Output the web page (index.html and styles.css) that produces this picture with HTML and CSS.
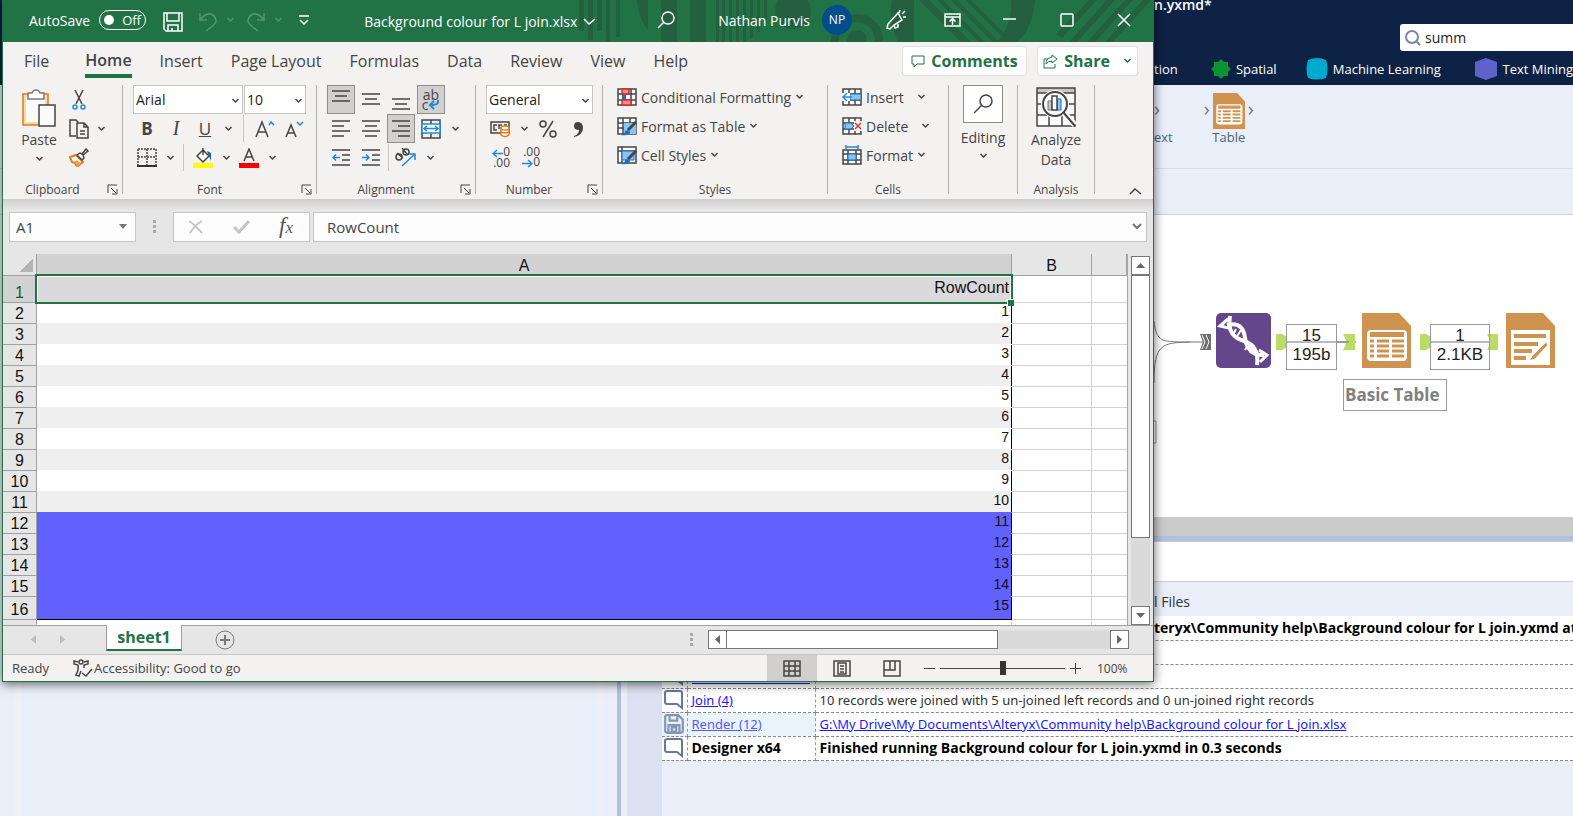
FILE: index.html
```html
<!DOCTYPE html>
<html lang="en">
<head>
    <meta charset="UTF-8">
    <meta name="viewport" content="width=device-width, initial-scale=1.0">
    <link rel="stylesheet" href="styles.css">
    <title>Background colour for L join.xlsx</title>
</head>
<body>

<!-- shared icons -->
<svg class="defs" aria-hidden="true">
    <symbol id="chev" viewBox="0 0 8 6"><path d="M1 1l3 3 3-3" fill="none" stroke="currentColor" stroke-width="1.5"/></symbol>
    <symbol id="launch" viewBox="0 0 11 11"><path d="M1 9V1h9M4 4l5 5M10 5v5H5" fill="none" stroke="currentColor"/></symbol>
    <symbol id="bubble" viewBox="0 0 20 22"><path d="M3 2h13q2 0 2 2v15l-5-4H3q-2 0-2-2V4q0-2 2-2z" fill="#fff" stroke="#66799c" stroke-width="2"/></symbol>
    <symbol id="tool-table" viewBox="0 0 49 55">
        <path d="M0 0h37l12 13v42H0z" fill="#d0924f"/>
        <rect x="6" y="18" width="38" height="29" rx="3" fill="#d0924f" stroke="#fff" stroke-width="2"/>
        <path d="M7 20h36v26H7z" fill="#fff"/>
        <path d="M8 20h34v4H8z" fill="#d0924f"/>
        <path d="M8 28h4m3 0h12m3 0h12M8 33h4m3 0h12m3 0h12M8 38h4m3 0h12m3 0h12M8 43h4m3 0h12m3 0h12" stroke="#d0924f" stroke-width="3"/>
    </symbol>
</svg>

<!-- Alteryx Designer -->
<main class="designer">
    <header class="designer-header">
        <div class="docked">
            <div class="project">n.yxmd*</div>
            <label class="finder">
                <svg width="18" height="18" viewBox="0 0 18 18"><circle cx="8" cy="8" r="6" fill="none" stroke="#7787a8" stroke-width="2"/><path d="M12 12l4 4" stroke="#7787a8" stroke-width="2"/></svg>
                <input type="text" value="summ" aria-label="Search tools">
            </label>
            <nav class="categories">
                <a href="#" class="cat-tion">tion</a>
                <a href="#" class="cat-spatial"><svg width="20" height="20" viewBox="0 0 20 20"><path d="M10 0l3 3 4 0 0 4 3 3-3 3 0 4-4 0-3 3-3-3-4 0 0-4-3-3 3-3 0-4 4 0z" fill="#0a9433"/></svg>Spatial</a>
                <a href="#" class="cat-ml"><svg width="22" height="22" viewBox="0 0 22 22"><path d="M2 2q9-4 18 0 3 9 0 18-9 3-18 0-3-9 0-18z" fill="#00a9ce"/></svg>Machine Learning</a>
                <a href="#" class="cat-text"><svg width="22" height="22" viewBox="0 0 22 22"><path d="M11 0l11 4v14l-11 4-11-4V4z" fill="#5f63c9"/></svg>Text Mining</a>
            </nav>
        </div>
    </header>

    <section class="palette">
        <div class="docked">
            <div class="tool tool-cut"><span class="port">›</span><span class="tool-name">ext</span></div>
            <div class="tool">
                <div class="tool-icon"><span class="port">›</span><svg width="32" height="36"><use href="#tool-table"/></svg><span class="port">›</span></div>
                <span class="tool-name">Table</span>
            </div>
        </div>
    </section>
    <div class="canvas-tabs"></div>

    <div class="workspace">
        <aside class="config"><div class="config-page"></div></aside>
        <div class="right-pane">
            <section class="canvas">
                <!-- workflow nodes, placed freely -->
                <div class="board">
                    <svg class="wires" width="419" height="300" viewBox="0 0 419 300">
                        <path d="M0 106c2 22 10 20 26 21h24M0 168c0-40 8-40 36-41" fill="none" stroke="#777"/>
                        <path d="M132 127h70M276 127h68" stroke="#777"/>
                        <path d="M0 206h2v22H0" fill="none" stroke="#999"/>
                        <path d="M46 119h11v16H46l3-8z" fill="#6d6d6d"/>
                        <path d="M48 120l3 7-3 7M52 120l3 7-3 7" fill="none" stroke="#fff"/>
                        <path d="M122 119h6l5 3v10l-5 3h-6zM266 119h6l5 3v10l-5 3h-6zM189 119h12v16h-12l4-8zM333 119h11v16h-11l4-8z" fill="#b8dc64"/>
                        <path d="M183 127h12" stroke="#777"/>
                    </svg>
                    <svg class="node node-union" width="55" height="55" viewBox="0 0 55 55">
                        <rect width="55" height="55" rx="5" fill="#64478a"/>
                        <path d="M14 3c-3 17 5 22 14 25s15 10 13 24" fill="none" stroke="#fff" stroke-width="4"/>
                        <path d="M11 12c14-3 17 5 18 13s6 18 19 17" fill="none" stroke="#fff" stroke-width="4"/>
                        <path d="M12 6L4 13l9 2M43 37l8 5-7 7" fill="none" stroke="#fff" stroke-width="3"/>
                        <path d="M20 16l-3 6M25 17l-5 8M33 30l-4 7M38 32l-4 8" stroke="#fff" stroke-width="2"/>
                    </svg>
                    <svg class="node node-table" width="49" height="55"><use href="#tool-table"/></svg>
                    <svg class="node node-render" width="49" height="55" viewBox="0 0 49 55">
                        <path d="M0 0h37l12 13v42H0z" fill="#d0924f"/>
                        <path d="M5 17h39v35H5z" fill="#fff"/>
                        <path d="M8 23h32M8 31h24M8 38h18M8 45h12" stroke="#d0924f" stroke-width="4"/>
                        <path d="M40 29L26 43l-3 5 6-2 13-14z" fill="#d0924f" stroke="#fff"/>
                    </svg>
                    <div class="count count-first">15<br>195b</div>
                    <div class="count count-second">1<br>2.1KB</div>
                    <div class="annotation">Basic Table</div>
                </div>
            </section>

            <section class="results">
                <div class="results-bar"></div>
                <div class="results-tabs"><div class="docked"><a href="#">l Files</a></div></div>
                <div class="results-body">
                    <table class="log">
                        <tbody>
                            <tr class="strong"><td></td><td></td><td><div class="docked">teryx\Community help\Background colour for L join.yxmd at</div></td></tr>
                            <tr><td></td><td></td><td></td></tr>
                            <tr><td><svg width="22" height="22"><use href="#bubble"/></svg></td><td class="cut"></td><td></td></tr>
                            <tr><td><svg width="22" height="22"><use href="#bubble"/></svg></td><td><a href="#">Join (4)</a></td><td>10 records were joined with 5 un-joined left records and 0 un-joined right records</td></tr>
                            <tr class="selected"><td><svg width="22" height="22" viewBox="0 0 20 20"><path d="M3 2h11l4 4v10q0 2-2 2H4q-2 0-2-2V3zM6 2v5h7V2M5 18v-7h10v7M8 13h4v4H8z" fill="none" stroke="#8496b3" stroke-width="2"/></svg></td><td><a href="#">Render (12)</a></td><td><a href="#">G:\My Drive\My Documents\Alteryx\Community help\Background colour for L join.xlsx</a></td></tr>
                            <tr class="strong"><td><svg width="22" height="22"><use href="#bubble"/></svg></td><td>Designer x64</td><td>Finished running Background colour for L join.yxmd in 0.3 seconds</td></tr>
                        </tbody>
                    </table>
                </div>
            </section>
        </div>
    </div>
</main>

<!-- Excel window -->
<div class="excel">
    <header class="titlebar">
        <svg class="pattern" width="574" height="42" viewBox="580 0 574 42" aria-hidden="true">
            <path d="M580 0h5v31h-5zM589 0h5v40h-5zM598 0h5v31h-5zM607 0h4v42h-4zM617 0h4v37h-4zM662 0h16v42h-16zM691 0h16v42h-16zM717 0h3v42h-3zM723 0h3v42h-3zM730 0h3v42h-3zM737 0h3v42h-3zM744 0h3v42h-3zM751 0h3v38h-3zM758 0h3v32h-3zM765 0h3v20h-3zM638 0h11v30q-10-12-11-30z"/>
            <path d="M893 0h22v42h-16q-10-20-6-42zM920 0h10l42 42h-10zM938 0h6l42 42h-6zM952 0h6l42 42h-6zM966 0h6l42 42h-6zM1012 0h24q-2 28-18 42h-20q16-18 14-42zM1090 0h8l-35 38-6-4zM1108 0h8l-38 42h-8zM1126 0h8l-38 42h-8zM1144 0h8l-38 42h-8z"/>
            <circle cx="794" cy="11" r="18"/><circle cx="858" cy="40" r="22" fill="none" stroke="#24603f" stroke-width="8"/><circle cx="858" cy="40" r="10"/>
        </svg>
        <span class="autosave">AutoSave</span>
        <button class="toggle" aria-label="AutoSave off"><i></i>Off</button>
        <button class="quick q-save" aria-label="Save"><svg width="20" height="20" viewBox="0 0 20 20"><path d="M1 1h18v18H3l-2-2zM4 1v8h12V1M5 19v-6h10v6M9 19v-3" fill="none" stroke="#fff" stroke-width="1.5"/></svg></button>
        <button class="quick q-undo" aria-label="Undo"><svg width="18" height="20" viewBox="0 0 18 20"><path d="M1 1v7h7M1 8q5-7 11-6 5 2 5 7 0 3-10 10" fill="none" stroke="#559573" stroke-width="1.5"/></svg></button>
        <button class="quick q-more faded" aria-label="Undo list"><svg width="9" height="6"><use href="#chev"/></svg></button>
        <button class="quick q-redo" aria-label="Redo"><svg width="18" height="20" viewBox="0 0 18 20"><path d="M17 1v7h-7M17 8q-5-7-11-6-5 2-5 7 0 3 10 10" fill="none" stroke="#559573" stroke-width="1.5"/></svg></button>
        <button class="quick q-more faded" aria-label="Redo list"><svg width="9" height="6"><use href="#chev"/></svg></button>
        <button class="quick q-custom" aria-label="Customize toolbar"><svg width="10" height="10" viewBox="0 0 10 10"><path d="M0 1h10M1 5l4 4 4-4" fill="none" stroke="#fff" stroke-width="1.5"/></svg></button>
        <button class="doc">Background colour for L join.xlsx<svg width="13" height="8" viewBox="0 0 13 8"><path d="M1 1l5 5 6-5" fill="none" stroke="#fff" stroke-width="1.5"/></svg></button>
        <button class="quick q-search" aria-label="Search"><svg width="18" height="18" viewBox="0 0 18 18"><circle cx="11" cy="7" r="6" fill="none" stroke="#fff" stroke-width="1.5"/><path d="M7 11l-6 6" stroke="#fff" stroke-width="1.5"/></svg></button>
        <span class="user">Nathan Purvis</span>
        <span class="avatar">NP</span>
        <button class="quick q-pen" aria-label="What's new"><svg width="20" height="20" viewBox="0 0 20 20"><path d="M12 3l4 7-8 5-4 4-3-1 1-4zM8 15l1 3 3-1v-3M13 3l1-3M16 4l3-3M17 7h3" fill="none" stroke="#fff" stroke-width="1.5"/></svg></button>
        <button class="quick q-ribbon" aria-label="Ribbon display options"><svg width="17" height="14" viewBox="0 0 17 14"><path d="M1 1h15v12H1zM1 4h15M8.5 12V6M5.5 8.5l3-3 3 3" fill="none" stroke="#fff" stroke-width="1.5"/></svg></button>
        <button class="quick q-min" aria-label="Minimize"><svg width="13" height="14" viewBox="0 0 13 14"><path d="M0 6h13" stroke="#fff" stroke-width="1.5"/></svg></button>
        <button class="quick q-max" aria-label="Maximize"><svg width="14" height="14" viewBox="0 0 14 14"><rect x="1" y="1" width="12" height="12" rx="1" fill="none" stroke="#fff" stroke-width="1.5"/></svg></button>
        <button class="quick q-close" aria-label="Close"><svg width="14" height="14" viewBox="0 0 14 14"><path d="M1 1l12 12M13 1L1 13" stroke="#fff" stroke-width="1.5"/></svg></button>
    </header>

    <nav class="tabs">
        <a href="#">File</a>
        <a href="#" class="active">Home</a>
        <a href="#">Insert</a>
        <a href="#">Page Layout</a>
        <a href="#">Formulas</a>
        <a href="#">Data</a>
        <a href="#">Review</a>
        <a href="#">View</a>
        <a href="#">Help</a>
        <button class="pill pill-comments"><svg width="14" height="13" viewBox="0 0 14 13"><path d="M1 1h12v8H6l-3 3V9H1z" fill="none" stroke="currentColor"/></svg>Comments</button>
        <button class="pill pill-share"><svg width="15" height="15" viewBox="0 0 15 15"><path d="M5 5H1v9h11v-4M9 1l5 4-5 4V7q-4 0-6 3 0-6 6-7z" fill="none" stroke="currentColor"/></svg>Share<svg class="pill-chev" width="9" height="6"><use href="#chev"/></svg></button>
    </nav>

    <section class="ribbon">
        <div class="group g-clipboard">
            <div class="tools clip">
                <button class="big">
                    <svg width="36" height="38" viewBox="0 0 36 38">
                        <path d="M2 5h25v31H2z" fill="#fbdc9c" stroke="#e07b1a" stroke-width="1.5"/><path d="M5 8h19v25H5z" fill="#fafafa"/>
                        <path d="M7 4h4q1-3 4-3t4 3h4v6H7z" fill="#fff" stroke="#7a7a7a" stroke-width="1.5"/>
                        <path d="M18 16h16v21H18z" fill="#fafafa" stroke="#444" stroke-width="1.5"/>
                    </svg>
                    <span>Paste</span>
                    <svg width="9" height="6"><use href="#chev"/></svg>
                </button>
                <div class="rows">
                    <div class="row"><button class="ico" aria-label="Cut"><svg width="14" height="20" viewBox="0 0 14 20"><path d="M3 0l7 14M11 0L4 14" stroke="#444" stroke-width="1.5"/><circle cx="3" cy="17" r="2" fill="none" stroke="#1e8ad6" stroke-width="1.5"/><circle cx="11" cy="17" r="2" fill="none" stroke="#1e8ad6" stroke-width="1.5"/></svg></button></div>
                    <div class="row"><button class="ico" aria-label="Copy"><svg width="20" height="20" viewBox="0 0 20 20"><path d="M7 17H1V1h6l2 2M8 4h7l4 4v11H8zM15 4v4h4M11 12h5M11 15h5" fill="none" stroke="#444" stroke-width="1.5"/></svg></button><button class="drop" aria-label="Copy options"><svg width="9" height="6"><use href="#chev"/></svg></button></div>
                    <div class="row"><button class="ico" aria-label="Format painter"><svg width="20" height="19" viewBox="0 0 20 19"><path d="M1 9l6-2 7 7-5 4q-2 0-3-3l-3-1z" fill="#fff" stroke="#e07b1a" stroke-width="2"/><path d="M5 14l3-2 4 4-3 2z" fill="#f5a04a"/><path d="M8 7l3-2 2 1 4-5 2 2-5 4 1 3-2 2z" fill="#fff" stroke="#444" stroke-width="1.5"/></svg></button></div>
                </div>
            </div>
            <div class="caption">Clipboard<button class="launch" aria-label="Clipboard settings"><svg width="11" height="11"><use href="#launch"/></svg></button></div>
        </div>

        <div class="group g-font">
            <div class="tools rows g1">
                <div class="row">
                    <div class="pick pick-font"><select aria-label="Font"><option>Arial</option></select><svg width="9" height="6"><use href="#chev"/></svg></div>
                    <div class="pick pick-size"><select aria-label="Font size"><option>10</option></select><svg width="9" height="6"><use href="#chev"/></svg></div>
                </div>
                <div class="row">
                    <button class="ico"><b>B</b></button>
                    <button class="ico ital">I</button>
                    <button class="ico"><u>U</u></button>
                    <button class="drop" aria-label="Underline options"><svg width="9" height="6"><use href="#chev"/></svg></button>
                    <i class="vsep"></i>
                    <button class="ico" aria-label="Increase font size"><svg width="20" height="18" viewBox="0 0 20 18"><path d="M1 17L7 2l6 15M3 12h8" fill="none" stroke="#444" stroke-width="1.5"/><path d="M14 5l2-3 3 3" fill="none" stroke="#1e8ad6" stroke-width="1.5"/></svg></button>
                    <button class="ico" aria-label="Decrease font size"><svg width="20" height="18" viewBox="0 0 20 18"><path d="M2 17L7 5l5 12M4 13h6" fill="none" stroke="#444" stroke-width="1.5"/><path d="M13 2l3 3 3-3" fill="none" stroke="#1e8ad6" stroke-width="1.5"/></svg></button>
                </div>
                <div class="row">
                    <button class="ico" aria-label="Borders"><svg width="20" height="20" viewBox="0 0 20 20"><path d="M1 1h18v17M1 1v17M10 1v17M1 9h18" fill="none" stroke="#444" stroke-width="1.5" stroke-dasharray="2 1"/><path d="M0 18h20" stroke="#333" stroke-width="2"/></svg></button>
                    <button class="drop" aria-label="Border options"><svg width="9" height="6"><use href="#chev"/></svg></button>
                    <i class="vsep mid"></i>
                    <button class="ico" aria-label="Fill colour"><svg width="20" height="20" viewBox="0 0 20 20"><path d="M4 8l6-6 6 6-6 6zM10 0v7" fill="#fff" stroke="#444" stroke-width="1.5"/><path d="M14 3l4 2v8l-2-5z" fill="#1565ad"/><path d="M0 15h20v5H0z" fill="#ff0"/></svg></button>
                    <button class="drop" aria-label="Fill options"><svg width="9" height="6"><use href="#chev"/></svg></button>
                    <button class="ico" aria-label="Font colour"><svg width="20" height="20" viewBox="0 0 20 20"><path d="M5 13l5-12 5 12M7 9h6" fill="none" stroke="#444" stroke-width="1.5"/><path d="M0 15h20v5H0z" fill="#f00"/></svg></button>
                    <button class="drop" aria-label="Font colour options"><svg width="9" height="6"><use href="#chev"/></svg></button>
                </div>
            </div>
            <div class="caption">Font<button class="launch" aria-label="Font settings"><svg width="11" height="11"><use href="#launch"/></svg></button></div>
        </div>

        <div class="group g-align">
            <div class="tools rows">
                <div class="row">
                    <button class="ico on" aria-label="Top align"><svg width="18" height="20" viewBox="0 0 18 20"><path d="M0 1h18M3 6h12M0 11h18" stroke="#444" stroke-width="1.5"/></svg></button>
                    <button class="ico" aria-label="Middle align"><svg width="18" height="20" viewBox="0 0 18 20"><path d="M0 4h18M3 9h12M0 14h18" stroke="#444" stroke-width="1.5"/></svg></button>
                    <button class="ico" aria-label="Bottom align"><svg width="18" height="20" viewBox="0 0 18 20"><path d="M0 9h18M3 14h12M0 19h18" stroke="#444" stroke-width="1.5"/></svg></button>
                    <button class="ico on wrap" aria-label="Wrap text"><span>ab</span><span>c</span><svg width="12" height="10" viewBox="0 0 12 10"><path d="M10 0v2q0 3-8 3M6 1L2 5l4 4" fill="none" stroke="#1e8ad6" stroke-width="2"/></svg></button>
                </div>
                <div class="row">
                    <button class="ico" aria-label="Align left"><svg width="18" height="18" viewBox="0 0 18 18"><path d="M0 1h18M0 6h12M0 11h18M0 16h12" stroke="#444" stroke-width="1.5"/></svg></button>
                    <button class="ico" aria-label="Center"><svg width="18" height="18" viewBox="0 0 18 18"><path d="M0 1h18M3 6h12M0 11h18M3 16h12" stroke="#444" stroke-width="1.5"/></svg></button>
                    <button class="ico on" aria-label="Align right"><svg width="18" height="18" viewBox="0 0 18 18"><path d="M0 1h18M6 6h12M0 11h18M6 16h12" stroke="#444" stroke-width="1.5"/></svg></button>
                    <button class="ico" aria-label="Merge"><svg width="20" height="20" viewBox="0 0 20 20"><path d="M1 1h18v18H1zM10 1v4M10 15v4" fill="none" stroke="#444" stroke-width="1.5"/><path d="M1 5h18v9H1z" fill="#fff" stroke="#1e8ad6" stroke-width="1.5"/><path d="M3 9.5h14M6 7L3 9.5 6 12M14 7l3 2.5-3 2.5" fill="none" stroke="#1e8ad6" stroke-width="1.5"/></svg></button>
                    <button class="drop" aria-label="Merge options"><svg width="9" height="6"><use href="#chev"/></svg></button>
                </div>
                <div class="row">
                    <button class="ico" aria-label="Decrease indent"><svg width="18" height="18" viewBox="0 0 18 18"><path d="M0 1h18M10 6h8M10 11h8M0 16h18" stroke="#444" stroke-width="1.5"/><path d="M8 8.5H1M4 5.5l-3 3 3 3" fill="none" stroke="#1e8ad6" stroke-width="1.5"/></svg></button>
                    <button class="ico" aria-label="Increase indent"><svg width="18" height="18" viewBox="0 0 18 18"><path d="M0 1h18M10 6h8M10 11h8M0 16h18" stroke="#444" stroke-width="1.5"/><path d="M0 8.5h7M4 5.5l3 3-3 3" fill="none" stroke="#1e8ad6" stroke-width="1.5"/></svg></button>
                    <i class="vsep tight"></i>
                    <button class="ico" aria-label="Orientation"><svg width="22" height="20" viewBox="0 0 22 20"><g fill="none" stroke="#444" stroke-width="1.5"><circle cx="4" cy="9" r="3"/><path d="M2 5l6 5M7 0l5 6"/><circle cx="11" cy="4" r="3"/></g><path d="M7 18L20 6M14 6h6v6" fill="none" stroke="#1e8ad6" stroke-width="1.5"/></svg></button>
                    <button class="drop" aria-label="Orientation options"><svg width="9" height="6"><use href="#chev"/></svg></button>
                </div>
            </div>
            <div class="caption">Alignment<button class="launch" aria-label="Alignment settings"><svg width="11" height="11"><use href="#launch"/></svg></button></div>
        </div>

        <div class="group g-number">
            <div class="tools rows">
                <div class="row"><div class="pick pick-number"><select aria-label="Number format"><option>General</option></select><svg width="9" height="6"><use href="#chev"/></svg></div></div>
                <div class="row">
                    <button class="ico" aria-label="Accounting format"><svg width="20" height="18" viewBox="0 0 20 18"><path d="M1 2h18v11H1z" fill="none" stroke="#444" stroke-width="1.5"/><path d="M7 5H4v5h3M12 5H9v4M17 5h-3" fill="none" stroke="#444" stroke-width="1.5"/><path d="M11 8v7q4 3 8 0V8z" fill="#fff" stroke="#e07b1a" stroke-width="1.5"/><ellipse cx="15" cy="8" rx="4" ry="2" fill="#fff" stroke="#e07b1a" stroke-width="1.5"/><path d="M11 12q4 2 8 0" fill="none" stroke="#e07b1a" stroke-width="1.5"/></svg></button>
                    <button class="drop" aria-label="Accounting options"><svg width="9" height="6"><use href="#chev"/></svg></button>
                    <button class="ico" aria-label="Percent"><svg width="18" height="18" viewBox="0 0 18 18"><g fill="none" stroke="#444" stroke-width="1.5"><circle cx="4" cy="4" r="3"/><circle cx="14" cy="14" r="3"/><path d="M14 1L4 17"/></g></svg></button>
                    <button class="ico" aria-label="Comma style"><svg width="11" height="16" viewBox="0 0 11 16"><path d="M1 15q5-2 5-6-5 0-5-4 0-4 4-4 5 0 5 6 0 7-9 9z" fill="#444"/></svg></button>
                </div>
                <div class="row">
                    <button class="ico dec"><span><svg width="11" height="9" viewBox="0 0 11 9"><path d="M11 4.5H1M5 1L1 4.5 5 8" fill="none" stroke="#1e8ad6" stroke-width="1.5"/></svg>0</span><span>.00</span></button>
                    <button class="ico dec"><span>.00</span><span><svg width="11" height="9" viewBox="0 0 11 9"><path d="M0 4.5h10M6 1l4 3.5L6 8" fill="none" stroke="#1e8ad6" stroke-width="1.5"/></svg>0</span></button>
                </div>
            </div>
            <div class="caption">Number<button class="launch" aria-label="Number settings"><svg width="11" height="11"><use href="#launch"/></svg></button></div>
        </div>

        <div class="group g-styles">
            <div class="tools stack">
                <button><svg width="20" height="18" viewBox="0 0 20 18"><path d="M1 1h18v16H1zM1 6h18M1 12h18M6 1v16M14 1v16" fill="#fff" stroke="#444" stroke-width="1.5"/><path d="M5 1h7v5H5zM5 12h9v5H5z" fill="#ff8a8a" stroke="#d92b2b" stroke-width="1.5"/><path d="M5 7h4v4H5z" fill="#1e6fc0"/></svg>Conditional Formatting<svg width="9" height="6"><use href="#chev"/></svg></button>
                <button><svg width="20" height="19" viewBox="0 0 20 19"><path d="M1 1h18v16H1zM1 6h18M1 11h18M6 1v16M13 1v16" fill="#fff" stroke="#444" stroke-width="1.5"/><path d="M7 6h12v11H7z" fill="#8ac4f0"/><path d="M19 5l-8 8" stroke="#444" stroke-width="3"/><path d="M4 18q4-1 4-4 4-2 5 1 0 4-9 3z" fill="#1e6fc0"/></svg>Format as Table<svg width="9" height="6"><use href="#chev"/></svg></button>
                <button><svg width="20" height="19" viewBox="0 0 20 19"><path d="M1 1h18v16H1zM1 5h18M5 1v16" fill="#fff" stroke="#444" stroke-width="1.5"/><path d="M5 5h12v9H5z" fill="#8ac4f0" stroke="#1e6fc0"/><path d="M19 5l-8 8" stroke="#444" stroke-width="3"/><path d="M4 18q4-1 4-4 4-2 5 1 0 4-9 3z" fill="#1e6fc0"/></svg>Cell Styles<svg width="9" height="6"><use href="#chev"/></svg></button>
            </div>
            <div class="caption">Styles</div>
        </div>

        <div class="group g-cells">
            <div class="tools stack">
                <button><svg width="20" height="18" viewBox="0 0 20 18"><path d="M1 1h18v16H1zM1 6h18M1 12h18M7 1v16M13 1v16" fill="#fff" stroke="#444" stroke-width="1.5"/><path d="M8 6h11v6H8z" fill="#8ac4f0" stroke="#1e6fc0"/><path d="M0 5h8v8H0z" fill="#fff"/><path d="M10 9H1M5 5L1 9l4 4" fill="none" stroke="#1e8ad6" stroke-width="1.5"/></svg>Insert<svg class="far" width="9" height="6"><use href="#chev"/></svg></button>
                <button><svg width="20" height="18" viewBox="0 0 20 18"><path d="M1 1h18v16H1zM1 6h18M1 12h18M7 1v16M13 1v16" fill="#fff" stroke="#444" stroke-width="1.5"/><path d="M12 4h8v10h-8z" fill="#f3f2f1"/><path d="M3 6h6l3 3-3 3H3z" fill="#8ac4f0" stroke="#1e6fc0"/><path d="M13 6l6 6M19 6l-6 6" stroke="#e03c31" stroke-width="1.5"/></svg>Delete<svg class="far" width="9" height="6"><use href="#chev"/></svg></button>
                <button><svg width="20" height="20" viewBox="0 0 20 20"><path d="M1 5h18v14H1zM1 9h18M1 15h18M6 5v14M14 5v14" fill="#fff" stroke="#444" stroke-width="1.5"/><path d="M6 9h8v6H6z" fill="#8ac4f0" stroke="#1e6fc0"/><path d="M4 2h12M4 0v4M16 0v4" stroke="#1e8ad6" stroke-width="1.5"/></svg>Format<svg width="9" height="6"><use href="#chev"/></svg></button>
            </div>
            <div class="caption">Cells</div>
        </div>

        <div class="group g-editing">
            <button class="tools big editing">
                <span class="frame"><svg width="20" height="20" viewBox="0 0 20 20"><circle cx="13" cy="7" r="6" fill="none" stroke="#444" stroke-width="1.5"/><path d="M9 11l-8 8" stroke="#444" stroke-width="1.5"/></svg></span>
                <span>Editing</span>
                <svg width="9" height="6"><use href="#chev"/></svg>
            </button>
        </div>

        <div class="group g-analysis">
            <button class="tools big analyze">
                <svg width="40" height="40" viewBox="0 0 40 40">
                    <path d="M1 1h38v38H1z" fill="#fafafa"/><path d="M1 1h38v5H1z" fill="#c8c6c4"/>
                    <path d="M1 1h38v38H1zM1 6h38M1 17h38M1 28h38M13 28v11M26 28v11" fill="none" stroke="#444" stroke-width="1.5"/>
                    <circle cx="19" cy="17" r="14" fill="#fafafa"/><circle cx="19" cy="17" r="12" fill="#fafafa" stroke="#444" stroke-width="2"/>
                    <path d="M28 26l11 12" stroke="#fafafa" stroke-width="6"/><path d="M27 25l12 14" stroke="#444" stroke-width="2"/>
                    <path d="M12 14h4v9h-4z" fill="#c8c6c4" stroke="#777"/><path d="M21 12h4v11h-4z" fill="#8ac4f0" stroke="#1e6fc0"/><path d="M16 9h5v14h-5z" fill="#fff" stroke="#444" stroke-width="1.5"/>
                </svg>
                <span>Analyze<br>Data</span>
            </button>
            <div class="caption">Analysis</div>
        </div>

        <button class="collapse" aria-label="Collapse ribbon"><svg width="13" height="8" viewBox="0 0 13 8"><path d="M1 7l5-5 6 5" fill="none" stroke="#444" stroke-width="1.5"/></svg></button>
    </section>

    <section class="formula-bar">
        <div class="namebox"><input type="text" value="A1" aria-label="Name box"><svg width="8" height="5"><path d="M0 0h8L4 5z" fill="#777"/></svg></div>
        <i class="grip"></i>
        <div class="fx">
            <svg width="16" height="14" viewBox="0 0 16 14"><path d="M1 1q5 3 13 12M14 1Q7 5 2 13" fill="none" stroke="#c4c4c4" stroke-width="2"/></svg>
            <svg width="18" height="15" viewBox="0 0 18 15"><path d="M1 8l5 5L16 2" fill="none" stroke="#c4c4c4" stroke-width="3"/></svg>
            <button aria-label="Insert function"><em>f</em><em>x</em></button>
        </div>
        <div class="formula"><input type="text" value="RowCount" aria-label="Formula"><svg width="10" height="7" viewBox="0 0 10 7"><path d="M1 1l4 4 4-4" fill="none" stroke="#777" stroke-width="2"/></svg></div>
    </section>

    <section class="sheet">
        <table class="grid">
            <colgroup><col class="c-head"><col><col class="c-b"><col class="c-c"></colgroup>
            <thead>
                <tr><th class="corner"></th><th class="sel">A</th><th>B</th><th></th></tr>
            </thead>
            <tbody>
                <tr class="first"><th>1</th><td class="active-cell">RowCount</td><td></td><td></td></tr>
                <tr><th>2</th><td>1</td><td></td><td></td></tr>
                <tr class="band"><th>3</th><td>2</td><td></td><td></td></tr>
                <tr><th>4</th><td>3</td><td></td><td></td></tr>
                <tr class="band"><th>5</th><td>4</td><td></td><td></td></tr>
                <tr><th>6</th><td>5</td><td></td><td></td></tr>
                <tr class="band"><th>7</th><td>6</td><td></td><td></td></tr>
                <tr><th>8</th><td>7</td><td></td><td></td></tr>
                <tr class="band"><th>9</th><td>8</td><td></td><td></td></tr>
                <tr><th>10</th><td>9</td><td></td><td></td></tr>
                <tr class="band"><th>11</th><td>10</td><td></td><td></td></tr>
                <tr class="blue"><th>12</th><td>11</td><td></td><td></td></tr>
                <tr class="blue"><th>13</th><td>12</td><td></td><td></td></tr>
                <tr class="blue"><th>14</th><td>13</td><td></td><td></td></tr>
                <tr class="blue"><th>15</th><td>14</td><td></td><td></td></tr>
                <tr class="blue last"><th>16</th><td>15</td><td></td><td></td></tr>
                <tr class="rest"><th></th><td></td><td></td><td></td></tr>
            </tbody>
        </table>
        <div class="vscroll">
            <button aria-label="Scroll up"><svg width="9" height="5"><path d="M0 5h9L4.5 0z" fill="#666"/></svg></button>
            <div class="vthumb"></div>
            <button class="end" aria-label="Scroll down"><svg width="9" height="5"><path d="M0 0h9L4.5 5z" fill="#666"/></svg></button>
        </div>
    </section>

    <section class="sheet-tabs">
        <svg class="nav" width="34" height="9" viewBox="0 0 34 9"><path d="M5 0v9L0 4.5zM29 0v9l5-4.5z" fill="#bdbdbd"/></svg>
        <button class="sheet-tab">sheet1</button>
        <button class="add" aria-label="New sheet"><svg width="20" height="20" viewBox="0 0 20 20"><circle cx="10" cy="10" r="9" fill="none" stroke="#777"/><path d="M5 10h10M10 5v10" stroke="#777" stroke-width="2"/></svg></button>
        <i class="grip"></i>
        <div class="hscroll">
            <button aria-label="Scroll left"><svg width="5" height="9"><path d="M5 0v9L0 4.5z" fill="#666"/></svg></button>
            <div class="hthumb"></div>
            <button class="end" aria-label="Scroll right"><svg width="5" height="9"><path d="M0 0v9l5-4.5z" fill="#666"/></svg></button>
        </div>
    </section>

    <footer class="status">
        <span>Ready</span>
        <span class="access"><svg width="20" height="18" viewBox="0 0 20 18"><g fill="none" stroke="#444" stroke-width="1.5"><circle cx="8" cy="3" r="2"/><path d="M5 3L1 2v3l4 1q1 5-2 10l3 1 2-5M11 3l4-1v3l-4 1v3M9 14l4 3 6-7"/></g></svg>Accessibility: Good to go</span>
        <div class="views">
            <button class="on" aria-label="Normal view"><svg width="18" height="17" viewBox="0 0 18 17"><path d="M1 1h16v15H1zM1 6h16M1 11h16M6 1v15M12 1v15" fill="none" stroke="#444" stroke-width="1.5"/></svg></button>
            <button aria-label="Page layout view"><svg width="18" height="17" viewBox="0 0 18 17"><path d="M1 1h16v15H1zM5 3h8v11H5zM7 6h4M7 9h4M7 12h4" fill="none" stroke="#444" stroke-width="1.5"/></svg></button>
            <button aria-label="Page break view"><svg width="18" height="17" viewBox="0 0 18 17"><path d="M1 1h16v15H1zM7 1v9M12 1v9H1" fill="none" stroke="#444" stroke-width="1.5"/></svg></button>
        </div>
        <div class="zoom">
            <button aria-label="Zoom out"><svg width="11" height="11"><path d="M0 5.5h11" stroke="#444"/></svg></button>
            <input type="range" min="0" max="100" value="50" aria-label="Zoom">
            <button aria-label="Zoom in"><svg width="11" height="11"><path d="M0 5.5h11M5.5 0v11" stroke="#444"/></svg></button>
            <span>100%</span>
        </div>
    </footer>
</div>

</body>
</html>
```
FILE: styles.css
```css
* {
    box-sizing: border-box;
}

body {
    margin: 0;
    font-family: "Open Sans", "Noto Sans", sans-serif;
    font-size: 14px;
    color: #444;
    overflow: hidden;
}

button {
    font: inherit;
    color: inherit;
    background: none;
    border: none;
    padding: 0;
    cursor: pointer;
}

svg {
    flex: none;
}

.defs {
    display: none;
}

/* Alteryx Designer */
.designer {
    display: flex;
    flex-direction: column;
    min-height: 100vh;
    background-color: #e9eef9;
}

/* the part of the designer that shows beside the Excel window */
.docked {
    width: 419px;
    margin-left: auto;
}

.designer-header {
    background-color: #0d2244;
    height: 85px;
    color: #fff;
    font-size: 13px;
    overflow: hidden;
}

.project {
    height: 24px;
    line-height: 9px;
    font-size: 14px;
    font-weight: 600;
}

.finder {
    display: flex;
    align-items: center;
    gap: 3px;
    height: 27px;
    margin-left: 246px;
    padding-left: 4px;
    background-color: #fff;
    border-radius: 3px 0 0 3px;
}

.finder input {
    flex: 1;
    min-width: 0;
    border: none;
    outline: none;
    padding: 0;
    font: 500 14px "Open Sans", sans-serif;
    color: #222;
}

.categories {
    display: flex;
    align-items: center;
    height: 36px;
    white-space: nowrap;
}

.categories a {
    display: flex;
    align-items: center;
    gap: 5px;
    color: #fff;
    text-decoration: none;
}

.cat-tion {
    width: 57px;
}

.cat-spatial {
    width: 95px;
}

.cat-ml {
    width: 170px;
}

.palette {
    height: 84px;
    border-bottom: 1px solid #dcdcdc;
}

.palette .docked {
    display: flex;
    gap: 31px;
    padding-top: 8px;
}

.tool {
    display: flex;
    flex-direction: column;
    align-items: center;
}

.tool-cut {
    align-items: flex-start;
}

.tool-icon {
    display: flex;
    align-items: center;
    gap: 3px;
}

.port {
    height: 36px;
    line-height: 32px;
    font-size: 20px;
    color: #777;
}

.tool-name {
    font-size: 13px;
    line-height: 16px;
    color: #4c6276;
}

.canvas-tabs {
    height: 46px;
    border-bottom: 1px solid #c9d2ea;
}

.workspace {
    flex: 1;
    display: flex;
}

.config {
    width: 617px;
    padding: 0 14px 0 15px;
}

.config-page {
    height: 100%;
    background-color: #e8eff9;
    border-left: 7px solid #eef0f4;
    border-right: 6px solid #eceff6;
}

.right-pane {
    flex: 1;
    min-width: 0;
    display: flex;
    flex-direction: column;
    border-left: 4px solid #b1bfe0;
}

.canvas {
    height: 321px;
    background-color: #fff;
    border-bottom: 19px solid #cbcbcb;
}

.board {
    position: relative;
    width: 419px;
    height: 300px;
    margin-left: auto;
}

.wires {
    position: absolute;
    left: 0;
    top: 0;
}

.node {
    position: absolute;
    top: 98px;
}

.node-union {
    left: 62px;
}

.node-table {
    left: 208px;
}

.node-render {
    left: 352px;
}

.count {
    position: absolute;
    top: 109px;
    height: 46px;
    padding-top: 1px;
    border: 1px solid #999;
    font: 17px/19px "Liberation Sans", Arial, sans-serif;
    text-align: center;
    color: #222;
}

.count-first {
    left: 132px;
    width: 51px;
}

.count-second {
    left: 276px;
    width: 60px;
}

.annotation {
    position: absolute;
    left: 189px;
    top: 164px;
    width: 104px;
    height: 32px;
    border: 1px solid #999;
    background-color: #fff;
    line-height: 30px;
    font-size: 17px;
    font-weight: 700;
    padding-left: 1px;
    color: #808080;
}

.results {
    flex: 1;
    display: flex;
    flex-direction: column;
    border-top: 5px solid #b1bfe0;
}

.results-bar {
    height: 41px;
    background-color: #fff;
    border-top: 1px solid #ccc;
    border-bottom: 1px solid #ccc;
}

.results-tabs {
    height: 34px;
    line-height: 39px;
}

.results-tabs a {
    color: #333;
    text-decoration: none;
}

.results-body {
    flex: 1;
    margin-left: 6px;
    padding-left: 35px;
    background: linear-gradient(90deg, #dbe1f0 35px, transparent 35px);
}

.log {
    width: 100%;
    table-layout: fixed;
    border-collapse: collapse;
    background-color: #fff;
    font-family: "Noto Sans", "Open Sans", sans-serif;
    font-size: 13px;
    color: #333;
}

.log tr {
    height: 24px;
}

.log td {
    padding: 0 4px;
    line-height: 18px;
    white-space: nowrap;
    overflow: hidden;
    border-bottom: 1px dashed #888;
    border-right: 1px dashed #999;
}

.log td:last-child {
    border-right: none;
}

.log td:first-child {
    width: 25px;
    padding: 0 1px;
}

.log td:nth-child(2) {
    width: 128px;
}

.log .docked {
    margin-right: -4px;
}

.log svg {
    display: block;
}

.log a {
    color: #1a1aff;
}

.log .cut {
    background: linear-gradient(#1a1aff, #1a1aff) 4px 18px / 118px 1px no-repeat;
}

.log .strong {
    font-family: "Open Sans", "Noto Sans", sans-serif;
    font-size: 14px;
    font-weight: 700;
    color: #000;
}

.selected td:nth-child(-n+2) {
    background-color: #e8f3fb;
}

.selected td:nth-child(2) a {
    color: #5a5af0;
}

/* Excel window */
.excel {
    position: absolute;
    left: 2px;
    right: 419px;
    top: 0;
    border: 1px solid #217346;
    border-top: none;
    background-color: #e6e6e6;
    box-shadow: 0 2px 10px rgba(0, 0, 0, 0.6);
}

.titlebar {
    position: relative;
    display: flex;
    align-items: center;
    height: 42px;
    padding: 0 22px 2px 26px;
    background-color: #217346;
    color: #fff;
    white-space: nowrap;
}

.pattern {
    position: absolute;
    right: 0;
    top: 0;
    fill: #24603f;
}

.titlebar > :not(.pattern) {
    position: relative;
}

.quick,
.doc,
.toggle {
    display: flex;
    align-items: center;
}

.toggle {
    width: 47px;
    height: 20px;
    margin-left: 9px;
    padding-left: 4px;
    gap: 8px;
    border: 1px solid #fff;
    border-radius: 10px;
    font-size: 13px;
    line-height: 18px;
}

.toggle i {
    width: 10px;
    height: 10px;
    border-radius: 50%;
    background-color: #fff;
}

.faded {
    color: #559573;
}

.q-save {
    margin-left: 17px;
    padding-top: 3px;
}

.q-undo {
    margin-left: 16px;
    padding-top: 3px;
}

.q-more {
    margin-left: 9px;
}

.q-redo {
    margin-left: 12px;
    padding-top: 3px;
}

.q-custom {
    margin-left: 16px;
}

.doc {
    margin-left: 55px;
    padding-top: 3px;
    gap: 6px;
}

.q-search {
    margin-left: auto;
}

.user {
    margin-left: 43px;
}

.avatar {
    width: 30px;
    height: 30px;
    margin-left: 12px;
    border-radius: 50%;
    background-color: #004e8c;
    font-size: 12px;
    line-height: 30px;
    text-align: center;
}

.q-pen {
    margin-left: 34px;
}

.q-ribbon {
    margin-left: 38px;
}

.q-min {
    margin-left: 42px;
}

.q-max {
    margin-left: 44px;
}

.q-close {
    margin-left: 43px;
}

.tabs {
    display: flex;
    align-items: flex-start;
    gap: 28px;
    height: 43px;
    padding: 4px 15px 0 21px;
    background-color: #f3f2f1;
    font-size: 16px;
    line-height: 28px;
    white-space: nowrap;
}

.tabs a {
    padding-top: 1px;
    color: #444;
    text-decoration: none;
}

.tabs a:first-child {
    margin-right: 8px;
}

.tabs .active {
    font-weight: 600;
    line-height: 27px;
    border-bottom: 4px solid #217346;
}

.pill {
    display: flex;
    align-items: center;
    justify-content: center;
    gap: 6px;
    height: 30px;
    background-color: #fff;
    border: 1px solid #e1dfdd;
    border-radius: 3px;
    color: #217346;
    font-weight: 700;
}

.pill-comments {
    width: 125px;
    margin-left: auto;
    margin-right: -18px;
}

.pill-share {
    width: 101px;
}

.pill-chev {
    margin-left: 7px;
}

.ribbon {
    display: flex;
    height: 114px;
    background-color: #f3f2f1;
}

.group {
    position: relative;
    display: flex;
    flex-direction: column;
    height: 109px;
    border-right: 1px solid #b3b0ad;
    white-space: nowrap;
}

.g-clipboard {
    width: 120px;
}

.g-font {
    width: 194px;
    padding-left: 10px;
}

.g-align {
    width: 159px;
    padding-left: 10px;
}

.g-number {
    width: 127px;
    padding-left: 10px;
}

.g-styles {
    width: 225px;
    padding-left: 14px;
}

.g-cells {
    width: 121px;
    padding-left: 14px;
}

.g-editing {
    width: 69px;
}

.g-analysis {
    width: 77px;
}

.tools {
    height: 94px;
}

.caption {
    position: absolute;
    left: 0;
    right: 0;
    bottom: -5px;
    padding-right: 20px;
    font-size: 12px;
    line-height: 18px;
    text-align: center;
}

.g-styles .caption,
.g-cells .caption,
.g-analysis .caption {
    padding-right: 0;
}

.launch {
    position: absolute;
    right: 4px;
    top: 3px;
    line-height: 0;
}

.clip {
    display: flex;
}

.big {
    display: flex;
    flex-direction: column;
    align-items: center;
    line-height: 20px;
}

.clip .big {
    width: 58px;
    padding: 4px 0 0 14px;
}

.clip .big span {
    margin: 3px 0 6px;
}

.clip .rows {
    padding-left: 4px;
}

.row {
    display: flex;
    align-items: center;
    gap: 2px;
    height: 29px;
}

.clip .row {
    gap: 0;
}

.g1 .row {
    gap: 1px;
}

.ico,
.drop {
    display: flex;
    align-items: center;
    justify-content: center;
    width: 28px;
    height: 29px;
    font-size: 17px;
}

.drop {
    width: 16px;
}

.on {
    background-color: #d2d0ce;
    border: 1px solid #8f8d8b;
}

.ital {
    font-family: "Liberation Serif", serif;
    font-style: italic;
    font-size: 20px;
}

.vsep {
    width: 1px;
    height: 27px;
    margin: 0 6px;
    background-color: #c8c6c4;
}

.mid {
    margin: 0 4px;
}

.tight {
    margin: 0 1px;
}

.wrap {
    flex-wrap: wrap;
    align-content: center;
    font-size: 14px;
    line-height: 10px;
}

.wrap span:first-child {
    width: 24px;
}

.dec {
    flex-direction: column;
    align-items: flex-end;
    padding-right: 4px;
    font-size: 12px;
    line-height: 10px;
}

.dec svg {
    vertical-align: middle;
}

.pick {
    position: relative;
    height: 29px;
}

.pick select {
    width: 100%;
    height: 100%;
    padding: 0 2px;
    border: 1px solid #c8c6c4;
    background-color: #fff;
    appearance: none;
    font: inherit;
    color: #222;
}

.pick svg {
    position: absolute;
    right: 3px;
    top: 13px;
}

.pick-font {
    width: 110px;
}

.pick-size {
    width: 62px;
}

.pick-number {
    width: 107px;
}

.stack button {
    display: flex;
    align-items: center;
    gap: 4px;
    height: 29px;
    padding-bottom: 5px;
}

.stack .far {
    margin-left: 9px;
}

.editing {
    gap: 5px;
}

.frame {
    display: flex;
    align-items: center;
    justify-content: center;
    width: 40px;
    height: 38px;
    background-color: #fff;
    border: 1px solid #8f8d8b;
}

.analyze {
    padding-top: 2px;
    gap: 3px;
}

.collapse {
    margin: auto 11px 4px auto;
    line-height: 0;
}

/* formula bar */
.formula-bar {
    display: flex;
    align-items: center;
    height: 55px;
    padding: 0 6px 0 6px;
    background: linear-gradient(#cfcfcf, #e6e6e6 11px);
}

.namebox,
.fx,
.formula {
    display: flex;
    align-items: center;
    height: 30px;
    background-color: #fdfdfd;
    border: 1px solid #c6c6c6;
}

.namebox {
    width: 127px;
    padding: 0 8px 0 6px;
}

.formula {
    flex: 1;
    margin-left: 3px;
    padding: 0 4px 0 13px;
}

.namebox input,
.formula input {
    flex: 1;
    min-width: 0;
    padding: 0;
    border: none;
    outline: none;
    background: none;
    font: inherit;
    font-size: 15px;
    color: #444;
}

.grip {
    width: 3px;
    height: 13px;
    background: repeating-linear-gradient(#aaa 0 3px, transparent 3px 5px);
}

.formula-bar .grip {
    margin: 0 17px 0 17px;
}

.fx {
    width: 137px;
    padding: 0 16px 0 14px;
    justify-content: space-between;
}

.fx em {
    font: italic 400 23px/20px "Liberation Serif", serif;
    color: #555;
}

.fx em + em {
    font-size: 17px;
}

/* grid */
.sheet {
    display: flex;
    padding-right: 3px;
}

.grid {
    flex: 1;
    table-layout: fixed;
    border-collapse: separate;
    border-spacing: 0;
    font-family: "Liberation Sans", Arial, sans-serif;
    color: #111;
    background-color: #fff;
    border-right: 1px solid #a6a6a6;
}

.c-head {
    width: 34px;
}

.c-b {
    width: 80px;
}

.c-c {
    width: 35px;
}

.grid th,
.grid td {
    padding: 0;
    font-weight: 400;
}

.grid th {
    height: 21px;
    font-size: 16px;
    line-height: 18px;
    background-color: #e6e6e6;
    border-bottom: 1px solid #a0a0a0;
    border-right: 1px solid #a0a0a0;
    vertical-align: bottom;
}

.grid thead th {
    height: 22px;
    line-height: 19px;
}

.grid .sel,
.first th {
    background-color: #d2d2d2;
}

.grid .first th {
    height: 27px;
    color: #0f5c3a;
}

.grid .corner {
    background: linear-gradient(135deg, transparent 50%, #b4b4b4 50%) right 3px bottom 3px / 14px 14px no-repeat #e6e6e6;
}

.grid td {
    border-right: 1px solid #d0d0d0;
    border-bottom: 1px solid #d0d0d0;
}

/* fills start on the grid line above the cell */
.grid td:nth-child(2) {
    padding-right: 2px;
    border-bottom: none;
    border-right-color: #000;
    box-shadow: 0 -1px #fff;
    font-size: 14px;
    line-height: 16px;
    text-align: right;
    vertical-align: top;
}

.grid td:last-child {
    border-right: none;
}

.grid .first .active-cell {
    position: relative;
    background-color: #dadada;
    box-shadow: inset 0 0 0 1px #fff;
    font-size: 16px;
    line-height: 24px;
}

.active-cell::before {
    content: "";
    position: absolute;
    inset: -2px -2px -1px;
    border: 2px solid #217346;
}

.active-cell::after {
    content: "";
    position: absolute;
    right: -3px;
    bottom: -3px;
    width: 6px;
    height: 6px;
    background-color: #217346;
    border: 1px solid #fff;
    border-width: 1px 0 0 1px;
}

.grid .band td:nth-child(2) {
    background-color: #efefef;
    box-shadow: 0 -1px #efefef;
}

.grid .blue td:nth-child(2) {
    background-color: #6161ff;
    box-shadow: 0 -1px #6161ff;
}

.grid .last th {
    height: 23px;
}

.grid .last td:nth-child(2) {
    border-bottom: 1px solid #000;
}

.grid .rest th {
    height: 5px;
    line-height: 4px;
    border-bottom-color: #e6e6e6;
}

.grid .rest td {
    border-bottom: none;
}

.grid .rest td:nth-child(2) {
    border-right-color: #d0d0d0;
    box-shadow: none;
    line-height: 4px;
}

.vscroll {
    display: flex;
    flex-direction: column;
    width: 19px;
    margin: 2px 0 0 3px;
    background-color: #dadada;
}

.vscroll button,
.hscroll button {
    display: flex;
    align-items: center;
    justify-content: center;
    width: 19px;
    height: 19px;
    background-color: #fff;
    border: 1px solid #777;
}

.vthumb {
    flex: 0 1 263px;
    background-color: #fff;
    border: 1px solid #777;
}

.vscroll .end {
    margin-top: auto;
}

.sheet-tabs {
    display: flex;
    align-items: flex-start;
    height: 30px;
    padding-right: 24px;
    border-top: 1px solid #a0a0a0;
    border-bottom: 1px solid #c6c6c6;
}

.nav {
    margin: 9px 0 0 28px;
}

.sheet-tab {
    width: 76px;
    height: 26px;
    margin: -1px 0 0 41px;
    background-color: #fff;
    border: 1px solid #a0a0a0;
    border-top: none;
    border-bottom: 2px solid #217346;
    color: #217346;
    font-size: 16px;
    font-weight: 700;
    line-height: 20px;
}

.add {
    margin: 4px 0 0 33px;
    line-height: 0;
}

.sheet-tabs .grip {
    margin: 7px 15px 0 auto;
}

.hscroll {
    display: flex;
    width: 421px;
    margin-top: 4px;
    background-color: #dadada;
}

.hthumb {
    width: 272px;
    margin-left: -1px;
    background-color: #fff;
    border: 1px solid #777;
}

.hscroll .end {
    margin-left: auto;
}

.status {
    display: flex;
    align-items: center;
    height: 26px;
    padding: 0 20px 0 9px;
    background-color: #f3f2f1;
    font-size: 13px;
}

.access {
    display: flex;
    align-items: center;
    gap: 1px;
    margin-left: 24px;
}

.views {
    display: flex;
    margin-left: auto;
}

.views button {
    display: flex;
    align-items: center;
    justify-content: center;
    width: 50px;
    height: 26px;
}

.views .on {
    border: none;
}

.zoom {
    display: flex;
    align-items: center;
    gap: 5px;
    margin-left: 7px;
}

.zoom button {
    line-height: 0;
}

.zoom span {
    width: 36px;
    margin-left: 11px;
    font-size: 12px;
}

.zoom input {
    width: 125px;
    height: 14px;
    margin: 0;
    appearance: none;
    background: linear-gradient(#444, #444) center / 100% 1px no-repeat;
}

.zoom input::-webkit-slider-thumb {
    appearance: none;
    width: 6px;
    height: 14px;
    background-color: #333;
}
```
